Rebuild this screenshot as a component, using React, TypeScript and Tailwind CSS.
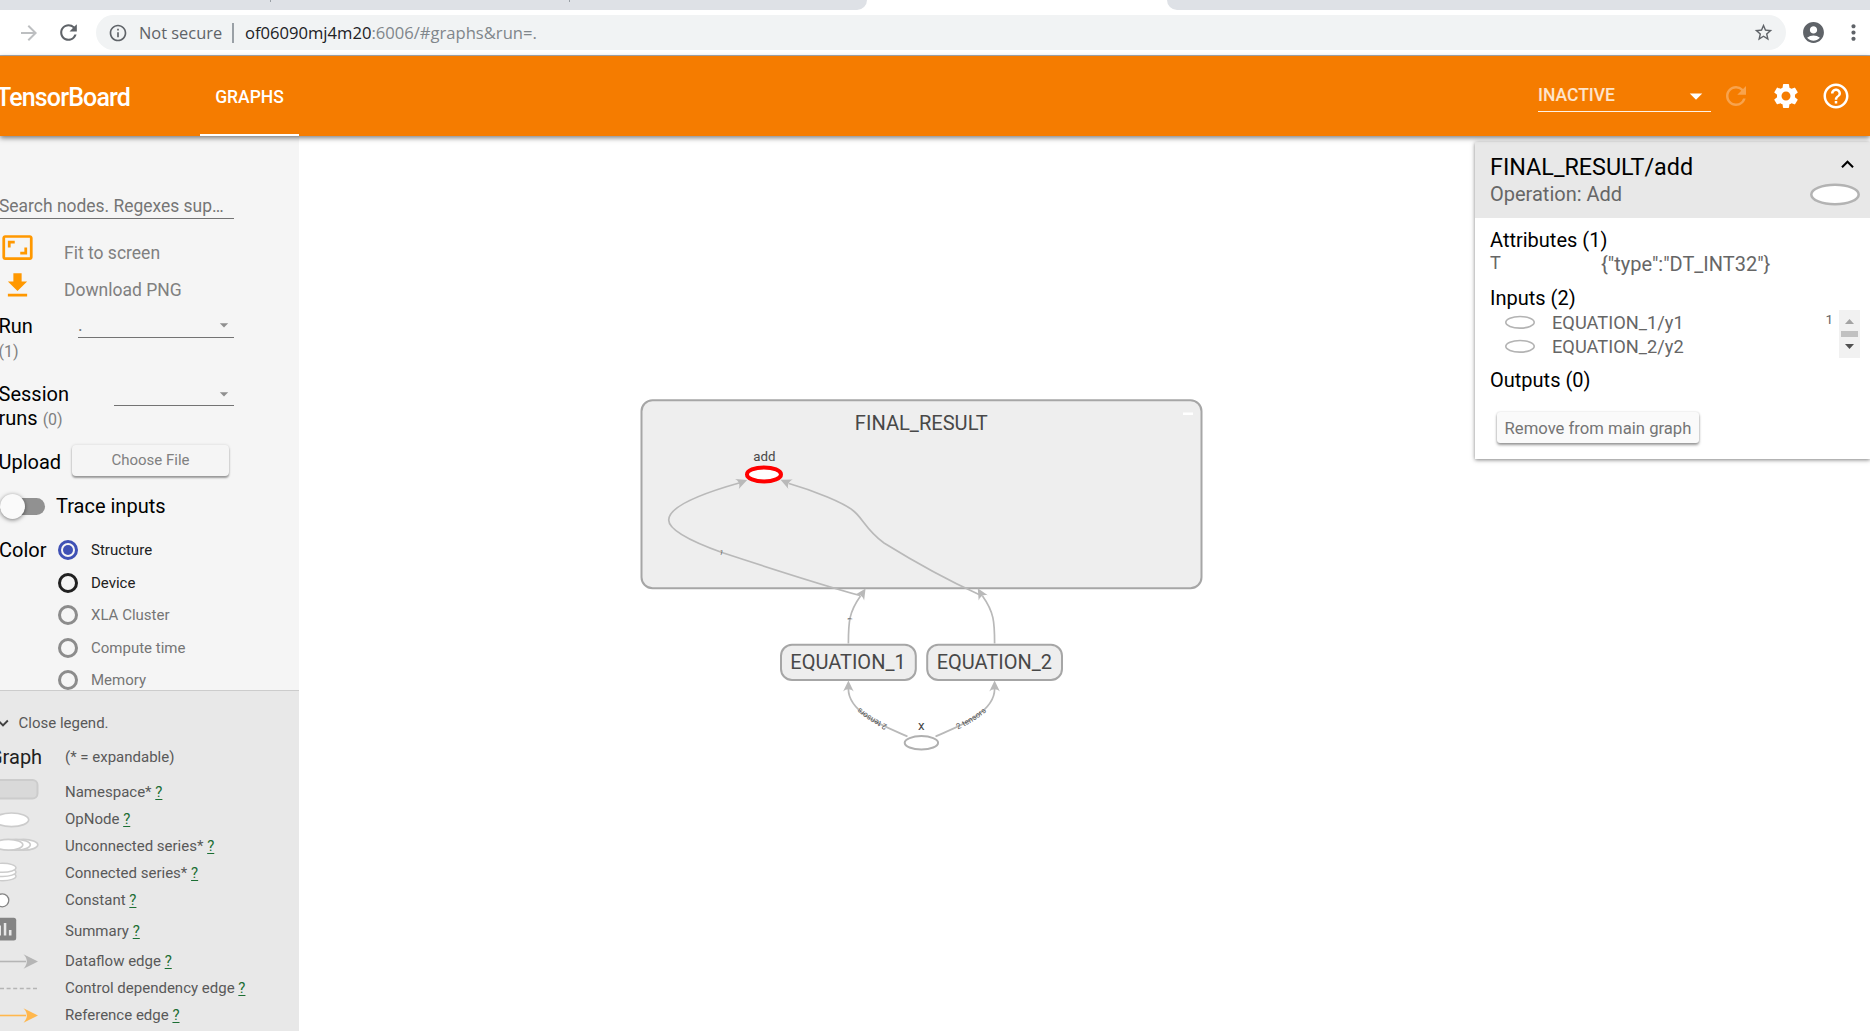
import type { ReactNode } from 'react';
import {
  MdAccountCircle,
  MdArrowDropDown,
  MdArrowForward,
  MdAspectRatio,
  MdExpandLess,
  MdExpandMore,
  MdFileDownload,
  MdHelpOutline,
  MdInfoOutline,
  MdMoreVert,
  MdRefresh,
  MdSettings,
  MdStarBorder,
} from 'react-icons/md';

function BrowserChrome() {
  return (
    <div className="h-[56px] shrink-0 border-b border-[#a9adb3] bg-white">
      <div className="flex h-[10px] justify-between">
        <div className="flex w-[867px] rounded-br-[10px] bg-[#dee1e6]">
          <div className="ml-[270px] h-[2px] w-px bg-[#9aa0a6]" />
          <div className="ml-[298px] h-[2px] w-px bg-[#9aa0a6]" />
        </div>
        <div className="w-[703px] rounded-bl-[10px] bg-[#dee1e6]" />
      </div>
      <div className="flex h-[45px] items-center pl-[17px] text-[#5f6368]">
        <MdArrowForward className="size-[24px] text-[#bdbfc1]" />
        <MdRefresh className="ml-[15px] size-[25px]" />
        <div className="ml-[15px] flex h-[35px] w-[1690px] items-center rounded-full bg-[#f1f3f4] pl-[12px] font-['Open_Sans',sans-serif] text-[16.6px]">
          <MdInfoOutline className="size-[20px]" />
          <span className="ml-[11px] w-[84px] pt-px text-[16.4px] whitespace-nowrap">Not secure</span>
          <span className="ml-[9px] h-[20px] w-[2px] bg-[#9aa0a6]" />
          <span className="ml-[11px] pt-px whitespace-nowrap text-[#80868b]">
            <span className="text-[#202124]">of06090mj4m20</span>:6006/#graphs&amp;run=.
          </span>
          <MdStarBorder className="mr-[12px] ml-auto size-[21px]" />
        </div>
        <MdAccountCircle className="ml-[15px] size-[25px]" />
        <MdMoreVert className="ml-[15px] size-[25px] shrink-0" />
      </div>
    </div>
  );
}

function AppBar() {
  return (
    <header className="relative z-10 flex h-[80px] shrink-0 items-center bg-[#f57c00] text-white shadow-[0_2px_5px_rgba(0,0,0,0.5)]">
      <h1 className="-ml-[4px] w-[204px] pt-[3px] text-[25px] font-medium tracking-[-0.034em]">TensorBoard</h1>
      <div className="flex h-full w-[99px] items-center justify-center border-b-2 border-white pt-[5px] text-[17.5px] font-medium">
        GRAPHS
      </div>
      <div className="mt-[24px] ml-auto flex h-[32px] w-[173px] items-center justify-between self-start border-b border-white/90 text-[17.5px] font-medium text-white/80">
        <span>INACTIVE</span>
        <MdArrowDropDown className="size-[30px] text-white" />
      </div>
      <MdRefresh className="ml-[10px] size-[30px] text-white/30" />
      <MdSettings className="ml-[20px] size-[30px]" />
      <MdHelpOutline className="mr-[19px] ml-[20px] size-[30px]" />
    </header>
  );
}

function Radio({ label, state }: { label: string; state: 'on' | 'off' | 'disabled' }) {
  const ring =
    state === 'on' ? 'border-[#3f51b5]' : state === 'off' ? 'border-[#212121]' : 'border-[#8c8c8c]';
  return (
    <div className="flex h-[32.5px] items-center">
      <span className={`flex size-[20px] items-center justify-center rounded-full border-[3px] ${ring}`}>
        {state === 'on' && <span className="size-[10px] rounded-full bg-[#3f51b5]" />}
      </span>
      <span className={`ml-[13px] text-[15px] ${state === 'disabled' ? 'text-[#757575]' : 'text-[#212121]'}`}>
        {label}
      </span>
    </div>
  );
}

function Controls() {
  return (
    <div className="h-[554px] shrink-0 overflow-hidden">
      <div className="mt-[57px] h-[26px] w-[234px] border-b border-[#737373] text-[17.45px] leading-[27px] whitespace-nowrap text-[#757575]">
        <span className="-ml-px">Search nodes. Regexes sup…</span>
      </div>
      <div className="mt-[15px] flex h-[37px] items-center">
        <MdAspectRatio className="mb-[10px] ml-[1px] size-[33px] text-[#ff9800]" />
        <span className="ml-[30px] pt-[2px] text-[17.5px] text-[#808080]">Fit to screen</span>
      </div>
      <div className="flex h-[37px] items-center">
        <MdFileDownload className="mb-[9px] ml-[1px] size-[33px] text-[#ff9800]" />
        <span className="ml-[30px] pt-[2px] text-[17.5px] text-[#808080]">Download PNG</span>
      </div>
      <div className="mt-[5px] flex h-[68px] items-start text-[20px] leading-[25px]">
        <div className="-ml-[1.5px] w-[79.5px] pt-px">
          Run
          <div className="text-[16px] text-[#808080]">(1)</div>
        </div>
        <div className="flex h-[25px] w-[156px] items-center justify-between border-b border-[#737373] text-[17.5px] text-[#757575]">
          <span className="pt-px">.</span>
          <MdArrowDropDown className="size-[20px] text-[#8f8f8f]" />
        </div>
      </div>
      <div className="mt-[1px] flex h-[63px] items-start text-[20px] leading-[24px]">
        <div className="-ml-[1.5px] w-[115.5px]">
          Session
          <br />
          runs <span className="text-[16px] text-[#808080]">(0)</span>
        </div>
        <div className="flex h-[24px] w-[120px] items-center justify-end border-b border-[#737373]">
          <MdArrowDropDown className="size-[20px] text-[#8f8f8f]" />
        </div>
      </div>
      <div className="flex h-[33px] items-center text-[20px]">
        <span className="-ml-[1.5px] w-[73.5px] pt-px">Upload</span>
        <div className="mb-[2px] flex h-[31px] w-[157px] items-center justify-center rounded-[4px] text-[15px] text-[#808080] shadow-[0_2px_2px_rgba(0,0,0,0.35),0_0_3px_rgba(0,0,0,0.14)]">
          Choose File
        </div>
      </div>
      <div className="mt-[12px] flex h-[32px] items-center text-[20px]">
        <div className="flex h-[17px] w-[45px] items-center rounded-full bg-[#919191]">
          <span className="size-[25px] shrink-0 rounded-full bg-[#fafafa] shadow-[0_1px_4px_rgba(0,0,0,0.5)]" />
        </div>
        <span className="ml-[11px]">Trace inputs</span>
      </div>
      <div className="mt-[12px] flex">
        <span className="-ml-px w-[59px] text-[20px] leading-[33px]">Color</span>
        <div>
          <Radio label="Structure" state="on" />
          <Radio label="Device" state="off" />
          <Radio label="XLA Cluster" state="disabled" />
          <Radio label="Compute time" state="disabled" />
          <Radio label="Memory" state="disabled" />
        </div>
      </div>
    </div>
  );
}

const head = 'M38 0L23.5-7.2C28-2.5 28 2.5 23.5 7.2Z';

function LegendRow({ label, h, children }: { label: string; h: string; children: ReactNode }) {
  return (
    <div className={`flex shrink-0 items-center ${h}`}>
      <svg className="h-[28px] w-[40px]" viewBox="0 -14 40 28">
        {children}
      </svg>
      <span className="ml-[25px] text-[15px] leading-[20px] whitespace-nowrap">
        {label} <a className="text-[#1b6e33] underline underline-offset-2">?</a>
      </span>
    </div>
  );
}

function Legend() {
  return (
    <div className="flex flex-1 flex-col overflow-hidden border-t border-[#ccc] bg-[#e8e8e8] text-[#595959]">
      <div className="mt-[19px] flex h-[26px] items-center text-[15px]">
        <MdExpandMore className="-ml-[8px] size-[22px] text-[#424242]" />
        <span className="ml-[4.5px]">Close legend.</span>
      </div>
      <div className="flex h-[42px] items-center">
        <span className="-ml-[11px] w-[76px] text-[20px] text-[#212121]">Graph</span>
        <span className="text-[15px]">(* = expandable)</span>
      </div>
      <LegendRow label="Namespace*" h="h-[28px]">
        <rect x="-20" y="-12" width="57.5" height="18.5" rx="5" fill="#d9d9d9" stroke="#ccc" strokeWidth="2" />
      </LegendRow>
      <LegendRow label="OpNode" h="h-[26px]">
        <ellipse cx="11.5" cy="0.8" rx="17.2" ry="6.8" fill="#fff" stroke="#ccc" strokeWidth="1.7" />
      </LegendRow>
      <LegendRow label="Unconnected series*" h="h-[27px]">
        <g fill="#fff" stroke="#ccc" strokeWidth="1.7">
          <ellipse cx="23.5" cy="-1.2" rx="14.3" ry="5.4" />
          <ellipse cx="16" cy="-1.2" rx="14.3" ry="5.4" />
          <ellipse cx="8.5" cy="-1.2" rx="14.3" ry="5.4" />
        </g>
      </LegendRow>
      <LegendRow label="Connected series*" h="h-[27px]">
        <g fill="#fff" stroke="#ccc" strokeWidth="1.4">
          <ellipse cx="2.5" cy="3.2" rx="13.5" ry="4.5" />
          <ellipse cx="2.5" cy="-1" rx="13.5" ry="4.5" />
          <ellipse cx="2.5" cy="-5.2" rx="13.5" ry="4.5" />
        </g>
      </LegendRow>
      <LegendRow label="Constant" h="h-[27px]">
        <circle cx="2.3" cy="0.3" r="6.5" fill="#fff" stroke="#848484" strokeWidth="1.3" />
      </LegendRow>
      <LegendRow label="Summary" h="h-[35px]">
        <rect x="-6.5" y="-13.2" width="22.7" height="22.7" rx="2.5" fill="#848484" />
        <path d="M-1.500-5.500H1V4.500H-1.500zM3.800-8H6.300V4.500H3.800zM8.900-1H11.500V4.500H8.900z" fill="#e8e8e8" />
      </LegendRow>
      <LegendRow label="Dataflow edge" h="h-[25px]">
        <path d="M0 .5H26" stroke="#b5b5b5" strokeWidth="1.6" />
        <path d={head} fill="#b5b5b5" transform="translate(0 .5)" />
      </LegendRow>
      <LegendRow label="Control dependency edge" h="h-[29px]">
        <path d="M0 .5H37" stroke="#b5b5b5" strokeWidth="1.3" strokeDasharray="4 2.6" />
      </LegendRow>
      <LegendRow label="Reference edge" h="h-[26px]">
        <path d="M0 .5H26" stroke="#ffb74d" strokeWidth="1.6" />
        <path d={head} fill="#ffb74d" transform="translate(0 .5)" />
      </LegendRow>
    </div>
  );
}

function Arrow({ x, y, angle }: { x: number; y: number; angle: number }) {
  return (
    <path
      d="M.5 0L-10.500-5.300C-7.500-2-7.500 2-10.500 5.300Z"
      fill="#b9b9b9"
      transform={`translate(${x} ${y}) rotate(${angle})`}
    />
  );
}

function GraphCanvas() {
  return (
    <svg className="h-full w-full" viewBox="299 136 1571 895" textAnchor="middle" fill="#484848">
      <g fill="#eee" stroke="#a6a6a6" strokeWidth="2">
        <rect x="641.5" y="400.3" width="560" height="188" rx="11" />
        <rect x="781" y="644.7" width="134.8" height="35.3" rx="11" />
        <rect x="927.2" y="644.7" width="134.8" height="35.3" rx="11" />
      </g>
      <path d="M1183 413.7H1193" stroke="#fff" strokeWidth="2.5" />

      <g fill="none" stroke="#b9b9b9" strokeWidth="1.7">
        <path d="M860 595.5C833 588 760 565 722 552.5C690 541 668.7 530 668.7 520C668.7 508 693 496 739 483" />
        <path d="M979 594.5C945 579 905 556 884 543C866 530 862 517 853 510.500C844 503 815 491 789 483.500" />
        <path d="M848.4 643.5C848.4 622 849 612 860.5 596" />
        <path d="M994.6 643.5C994.6 622 994 612 982.5 596" />
        <path id="edge-left" d="M907.5 736.5C893 729.5 848.4 715 848.4 689" />
        <path id="edge-right" d="M935.5 736.5C950 729.5 994.6 715 994.6 689" />
      </g>
      <Arrow x={746.7} y={480.3} angle={-21} />
      <Arrow x={781} y={480} angle={204} />
      <Arrow x={865.3} y={588.8} angle={-57.5} />
      <Arrow x={978} y={588.8} angle={-120} />
      <Arrow x={848.4} y={681} angle={-90} />
      <Arrow x={994.6} y={681} angle={-90} />

      <g fontSize="8" fill="#555">
        <text dy="2.5">
          <textPath href="#edge-left" startOffset="50%">2 tensors</textPath>
        </text>
        <text dy="2.5">
          <textPath href="#edge-right" startOffset="50%">2 tensors</textPath>
        </text>
        <text fontSize="6.5" transform="translate(721.5 552.5) rotate(17)" dy="2.3">1</text>
        <text fontSize="6.5" transform="translate(849.8 619) rotate(-84)" dy="2.3">1</text>
      </g>

      <ellipse cx="764" cy="474.4" rx="17" ry="7" fill="#fff" stroke="#f00" strokeWidth="4" />
      <ellipse cx="921.4" cy="742.8" rx="16.7" ry="6.7" fill="#fff" stroke="#b0b0b0" strokeWidth="2" />

      <g fontSize="20">
        <text x="921.3" y="430.3" fontSize="20.1">FINAL_RESULT</text>
        <text x="848" y="669">EQUATION_1</text>
        <text x="994.3" y="669">EQUATION_2</text>
      </g>
      <text x="764.3" y="461" fontSize="13.3">add</text>
      <text x="921.4" y="730" fontSize="13.3">x</text>
    </svg>
  );
}

function InputRow({ name }: { name: string }) {
  return (
    <div className="flex h-[24px] items-center text-[18.25px]">
      <svg className="ml-[15px] h-[14px] w-[30px]" viewBox="0 0 30 14">
        <ellipse cx="15" cy="7.3" rx="14.200" ry="5.800" fill="#fff" stroke="#b3b3b3" strokeWidth="1.6" />
      </svg>
      <span className="ml-[17px] pt-px">{name}</span>
    </div>
  );
}

function InfoPanel() {
  return (
    <aside className="absolute top-[6px] right-0 h-[317px] w-[395px] bg-white text-[20px] text-[#666] shadow-[0_1px_4px_rgba(0,0,0,0.5)]">
      <div className="flex h-[76px] justify-between bg-[#e8e8e8] pr-[10px] pl-[15px]">
        <div className="pt-[10px]">
          <h2 className="text-[23.35px] leading-[30px] font-[450] text-black">FINAL_RESULT/add</h2>
          <p className="leading-[25px]">Operation: Add</p>
        </div>
        <div className="flex flex-col items-center pt-[10px]">
          <MdExpandLess className="-mr-[25px] size-[25px] text-black" />
          <svg className="mt-[6px] h-[23px] w-[50px]" viewBox="0 0 50 23">
            <ellipse cx="25" cy="11.5" rx="23.700" ry="9.800" fill="#fff" stroke="#b3b3b3" strokeWidth="2.500" />
          </svg>
        </div>
      </div>
      <div className="px-[15px] pt-[10px]">
        <h3 className="leading-[24px] font-[450] text-black">Attributes (1)</h3>
        <div className="flex h-[24px] leading-[24px]">
          <span className="w-[111px] text-[18.2px] leading-[22px]">T</span>
          <span>{'{"type":"DT_INT32"}'}</span>
        </div>
        <h3 className="mt-[10px] leading-[24px] font-[450] text-black">Inputs (2)</h3>
        <div className="-mr-[5px] flex h-[48px]">
          <div className="flex-1">
            <InputRow name="EQUATION_1/y1" />
            <InputRow name="EQUATION_2/y2" />
          </div>
          <span className="mr-[6px] text-[13.5px] leading-[19px]">1</span>
          <div className="flex w-[21px] flex-col items-center justify-between bg-[#f1f1f1] py-[9px]">
            <svg className="h-[5px] w-[9px]" viewBox="0 0 9 5" fill="#a3a3a3">
              <path d="M0 5L4.5 0L9 5Z" />
            </svg>
            <span className="h-[6px] w-[17px] bg-[#c1c1c1]" />
            <svg className="h-[5px] w-[9px]" viewBox="0 0 9 5" fill="#505050">
              <path d="M0 0L4.5 5L9 0Z" />
            </svg>
          </div>
        </div>
        <h3 className="mt-[10px] leading-[24px] font-[450] text-black">Outputs (0)</h3>
        <button className="mt-[20px] ml-[7px] flex h-[31px] w-[202px] items-center justify-center rounded-[3px] bg-[#fafafa] pt-[2px] text-[16.67px] text-[#757575] shadow-[0_2px_3px_rgba(0,0,0,0.4),0_0_2px_rgba(0,0,0,0.15)]">
          Remove from main graph
        </button>
      </div>
    </aside>
  );
}

export default function App() {
  return (
    <div className="flex h-[1031px] w-[1870px] flex-col overflow-hidden bg-white font-['Roboto',sans-serif]">
      <BrowserChrome />
      <AppBar />
      <div className="flex min-h-0 flex-1">
        <nav className="flex w-[299px] shrink-0 flex-col bg-[#f5f5f5] text-black">
          <Controls />
          <Legend />
        </nav>
        <main className="relative min-w-0 flex-1">
          <GraphCanvas />
          <InfoPanel />
        </main>
      </div>
    </div>
  );
}
